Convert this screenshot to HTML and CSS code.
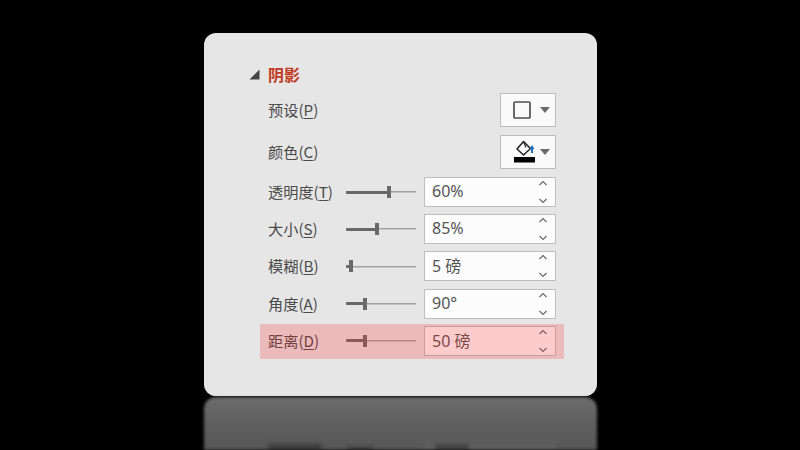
FILE: index.html
```html
<!DOCTYPE html>
<html lang="zh">
<head>
<meta charset="utf-8">
<title>阴影</title>
<link rel="stylesheet" href="styles.css">
</head>
<body>
<main class="stage">
  <section class="card">
    <header class="head">
      <svg class="caret" width="11" height="11" viewBox="0 0 11 11"><path d="M10.500 .5V10.500H.5Z" fill="#444"/></svg>
      <h1 class="title">阴影</h1>
    </header>
    <div class="pickers">
      <div class="row">
        <span class="label">预设(<u>P</u>)</span>
        <button class="pick">
          <svg width="18" height="18" viewBox="0 0 18 18"><rect x="1" y="1" width="16" height="16" rx="1" fill="none" stroke="#505050" stroke-width="1.700"/></svg>
          <svg class="drop" width="10" height="6" viewBox="0 0 10 6"><path d="M0 0H10L5 6Z" fill="#6a6a6a"/></svg>
        </button>
      </div>
      <div class="row">
        <span class="label">颜色(<u>C</u>)</span>
        <button class="pick">
          <svg class="bucket" width="22" height="24" viewBox="0 0 22 24"><path d="M9.500 1.500 3 9l6.500 6 7-6.500Z" fill="#fff" stroke="#222" stroke-width="1.500" stroke-linejoin="round"/><path d="M9.500 1.500l2.500 6" stroke="#222" stroke-width="1.200"/><path d="M18 13V8" fill="none" stroke="#1f6fb5" stroke-width="2"/><path d="M15.500 9 18 5l2.500 4Z" fill="#1f6fb5"/><rect x="0" y="17" width="21" height="5.500" fill="#000"/></svg>
          <svg class="drop" width="10" height="6" viewBox="0 0 10 6"><path d="M0 0H10L5 6Z" fill="#6a6a6a"/></svg>
        </button>
      </div>
    </div>
    <div class="fields">
      <div class="row">
        <span class="label">透明度(<u>T</u>)</span>
        <div class="slider"><i class="fill" style="width:42px"></i><i class="thumb"></i></div>
        <div class="spin"><span class="value">60%</span><svg class="arrows" width="10" height="24" viewBox="0 0 10 24"><path d="M1.500 5 5 1.500 8.500 5M1.500 19 5 22.500 8.500 19" fill="none" stroke="#666" stroke-width="1.100"/></svg></div>
      </div>
      <div class="row">
        <span class="label">大小(<u>S</u>)</span>
        <div class="slider"><i class="fill" style="width:30px"></i><i class="thumb"></i></div>
        <div class="spin"><span class="value">85%</span><svg class="arrows" width="10" height="24" viewBox="0 0 10 24"><path d="M1.500 5 5 1.500 8.500 5M1.500 19 5 22.500 8.500 19" fill="none" stroke="#666" stroke-width="1.100"/></svg></div>
      </div>
      <div class="row">
        <span class="label">模糊(<u>B</u>)</span>
        <div class="slider"><i class="fill" style="width:4px"></i><i class="thumb"></i></div>
        <div class="spin"><span class="value">5 磅</span><svg class="arrows" width="10" height="24" viewBox="0 0 10 24"><path d="M1.500 5 5 1.500 8.500 5M1.500 19 5 22.500 8.500 19" fill="none" stroke="#666" stroke-width="1.100"/></svg></div>
      </div>
      <div class="row">
        <span class="label">角度(<u>A</u>)</span>
        <div class="slider"><i class="fill" style="width:18px"></i><i class="thumb"></i></div>
        <div class="spin"><span class="value">90°</span><svg class="arrows" width="10" height="24" viewBox="0 0 10 24"><path d="M1.500 5 5 1.500 8.500 5M1.500 19 5 22.500 8.500 19" fill="none" stroke="#666" stroke-width="1.100"/></svg></div>
      </div>
      <div class="row marked">
        <span class="label">距离(<u>D</u>)</span>
        <div class="slider"><i class="fill" style="width:18px"></i><i class="thumb"></i></div>
        <div class="spin"><span class="value">50 磅</span><svg class="arrows" width="10" height="24" viewBox="0 0 10 24"><path d="M1.500 5 5 1.500 8.500 5M1.500 19 5 22.500 8.500 19" fill="none" stroke="#666" stroke-width="1.100"/></svg></div>
      </div>
    </div>
  </section>
  <div class="mirror">
    <i class="ghost ghost-box"></i>
    <i class="ghost ghost-label"></i>
    <i class="ghost ghost-slider"></i>
    <i class="ghost ghost-value"></i>
  </div>
</main>
</body>
</html>
```
FILE: styles.css
```css
* { box-sizing: border-box; }
html, body { margin: 0; height: 100%; background: #000; overflow: hidden; }
body { font-family: "Noto Sans", "Noto Sans CJK SC", sans-serif; color: #444; }

.stage { display: flex; flex-direction: column; align-items: center; height: 450px; padding-top: 33px; }

.card {
  width: 393px;
  height: 363px;
  flex: none;
  background: #e6e6e6;
  border-radius: 12px;
  border-bottom: 1px solid #f6f6f6;
  padding: 29px 41px 0 45px;
  margin-left: 1px;
}

.head { display: flex; align-items: center; gap: 8px; height: 24px; margin-bottom: 7px; }
.caret { flex: none; }
.title { margin: 0; font: 700 16px "Noto Sans CJK SC", sans-serif; color: #c0391c; }

.row { display: flex; align-items: center; justify-content: space-between; padding-left: 19px; }
.label { font: 15.200px "Noto Sans CJK SC", sans-serif; color: #4a4a4a; white-space: nowrap; flex: none; margin-bottom: 2px; }
.label u { text-underline-offset: 2px; }

.pickers { display: flex; flex-direction: column; gap: 8px; margin-bottom: 8px; }
.pick {
  width: 56px;
  height: 34px;
  padding: 0 0 0 12px;
  display: flex;
  align-items: center;
  gap: 9px;
  background: #fafafa;
  border: 1px solid #bdbdbd;
}
.pick .drop { flex: none; }
.pick svg:first-child { flex: none; }
.pick .bucket { margin-right: -5px; margin-left: 1px; }

.fields { display: flex; flex-direction: column; gap: 7.200px; }
.fields .row { justify-content: flex-start; position: relative; }
.fields .label { width: 78px; }

.slider { position: relative; width: 70px; height: 12px; margin-right: 8px; flex: none; display: flex; align-items: center; background: linear-gradient(#a3a3a3, #a3a3a3) center / 100% 1.500px no-repeat; }
.fill { display: block; height: 3px; background: #696969; border-radius: 1px; flex: none; }
.thumb { display: block; width: 3.500px; height: 12px; background: #696969; margin-left: -1px; flex: none; }

.spin {
  width: 132px;
  height: 30px;
  flex: none;
  display: flex;
  align-items: center;
  justify-content: space-between;
  padding: 0 7px 0 7px;
  background: #fcfcfc;
  border: 1px solid #bdbdbd;
}
.value { font-size: 16px; color: #555; font-family: "Noto Sans", "Noto Sans CJK SC", sans-serif; margin-bottom: 2px; }
.arrows { flex: none; }

.marked::after {
  content: "";
  position: absolute;
  left: 11px;
  right: -8px;
  top: -2px;
  bottom: -3px;
  background: rgba(255, 30, 30, .22);
}

.mirror {
  position: relative;
  width: 393px;
  flex: none;
  height: 53px;
  margin-top: 1px;
  margin-left: 1px;
  border-radius: 12px 12px 0 0;
  background: linear-gradient(#6c6c6c, #5e5e5e 55%, #565656);
  filter: blur(1.500px);
  overflow: hidden;
}
.ghost { position: absolute; display: block; filter: blur(1.500px); }
.ghost-box { left: 220px; top: 43px; width: 132px; height: 12px; background: #5e5e5e; }
.ghost-label { left: 64px; top: 47px; width: 54px; height: 10px; background: #3e3e3e; }
.ghost-slider { left: 143px; top: 50px; width: 26px; height: 5px; background: #3a3a3a; }
.ghost-value { left: 231px; top: 47px; width: 34px; height: 10px; background: #434343; }
```
